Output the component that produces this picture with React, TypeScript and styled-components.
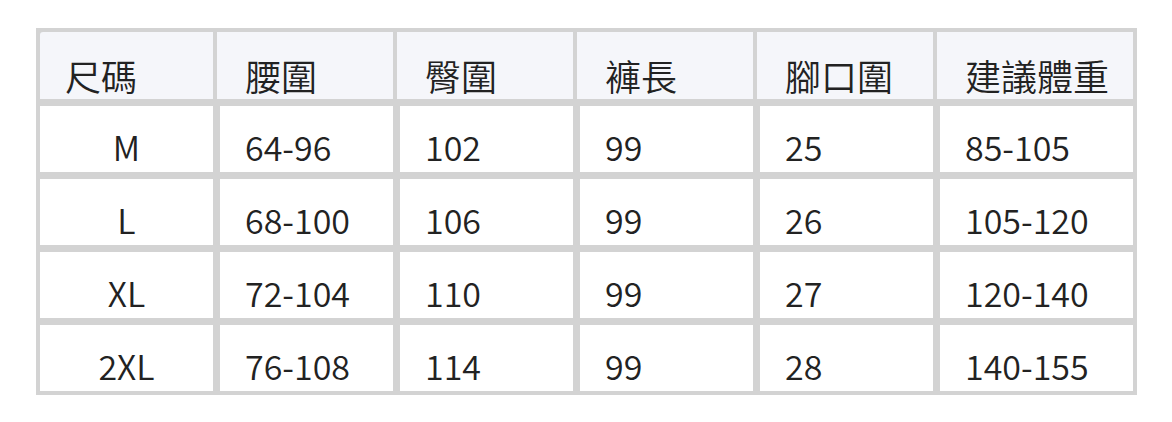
import React from "react";
import styled, { createGlobalStyle } from "styled-components";

const GlobalStyle = createGlobalStyle`
  html, body {
    margin: 0;
    padding: 0;
    background: #ffffff;
  }
  body {
    font-family: "Noto Sans CJK TC", "Noto Sans", sans-serif;
  }
`;

const Page = styled.div`
  padding: 28px 0 0 36px;
`;

const Table = styled.table`
  border-collapse: separate;
  border-spacing: 0;
  table-layout: fixed;
  width: 1101px;
  border: 4px solid #d3d3d3;
  background: #d3d3d3;
  font-family: "Noto Sans CJK TC", "Noto Sans", sans-serif;
  font-size: 34px;
  font-weight: 350;
  color: #222222;
`;

const HeadCell = styled.th<{ $w: number; $first?: boolean }>`
  box-sizing: border-box;
  width: ${(p) => p.$w}px;
  background: #f5f6fa;
  font-weight: 350;
  font-size: 36px;
  text-align: left;
  vertical-align: top;
  line-height: 48px;
  padding: 19px 0 0 ${(p) => (p.$first ? 25 : 28)}px;
  border-left: ${(p) => (p.$first ? "none" : "4px solid #d3d3d3")};
  border-top-left-radius: ${(p) => (p.$first ? "3px" : "0")};
  white-space: nowrap;
`;

const Cell = styled.td<{ $first?: boolean }>`
  box-sizing: border-box;
  background: #ffffff;
  text-align: ${(p) => (p.$first ? "center" : "left")};
  vertical-align: top;
  line-height: 51px;
  padding: 15px 0 0 ${(p) => (p.$first ? 0 : 25)}px;
  border-top: 7px solid #d3d3d3;
  border-left: ${(p) => (p.$first ? "none" : "7px solid #d3d3d3")};
  white-space: nowrap;
`;

const headers = ["尺碼", "腰圍", "臀圍", "褲長", "腳口圍", "建議體重"];
const widths = [173, 180, 180, 180, 180, 200];

const rows = [
  ["M", "64-96", "102", "99", "25", "85-105"],
  ["L", "68-100", "106", "99", "26", "105-120"],
  ["XL", "72-104", "110", "99", "27", "120-140"],
  ["2XL", "76-108", "114", "99", "28", "140-155"],
];

export default function App() {
  return (
    <>
      <GlobalStyle />
      <Page>
        <Table>
          <thead>
            <tr>
              {headers.map((h, i) => (
                <HeadCell key={h} $w={widths[i]} $first={i === 0}>
                  {h}
                </HeadCell>
              ))}
            </tr>
          </thead>
          <tbody>
            {rows.map((r) => (
              <tr key={r[0]}>
                {r.map((v, i) => (
                  <Cell key={i} $first={i === 0}>
                    {v}
                  </Cell>
                ))}
              </tr>
            ))}
          </tbody>
        </Table>
      </Page>
    </>
  );
}
